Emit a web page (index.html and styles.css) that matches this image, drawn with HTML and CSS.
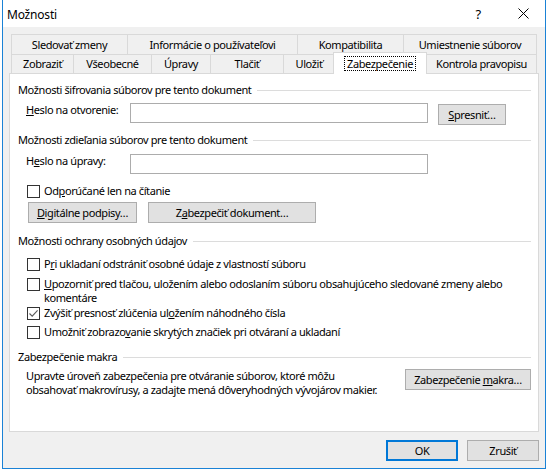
FILE: index.html
```html
<!DOCTYPE html>
<html lang="sk">
<head>
<meta charset="utf-8">
<title>Možnosti</title>
<link rel="stylesheet" href="styles.css">
</head>
<body>
<div class="dialog">
  <div class="titlebar">
    <span class="title">Možnosti</span>
    <span class="help">?</span>
    <span class="close"><svg width="11" height="11" viewBox="0 0 11 11"><path d="M0.5 0.5 L10.5 10.5 M10.5 0.5 L0.5 10.5" stroke="#000" stroke-width="1" fill="none"/></svg></span>
  </div>
  <div class="body">
    <div class="tabs">
      <div class="tabrow row1">
        <div class="tab">Sledovať zmeny</div>
        <div class="tab">Informácie o používateľovi</div>
        <div class="tab">Kompatibilita</div>
        <div class="tab last">Umiestnenie súborov</div>
      </div>
      <div class="tabrow row2">
        <div class="tab">Zobraziť</div>
        <div class="tab">Všeobecné</div>
        <div class="tab">Úpravy</div>
        <div class="tab">Tlačiť</div>
        <div class="tab">Uložiť</div>
        <div class="tab selected"><span class="focus">Zabezpečenie</span></div>
        <div class="tab last">Kontrola pravopisu</div>
      </div>
    </div>
    <div class="panel">
      <div class="heading h1">Možnosti šifrovania súborov pre tento dokument</div>
      <div class="field-row r1">
        <span class="label"><u>H</u>eslo na otvorenie:</span>
        <span class="input"></span>
        <span class="btn spresnit"><span><u>S</u>presniť…</span></span>
      </div>
      <div class="heading h2">Možnosti zdieľania súborov pre tento dokument</div>
      <div class="field-row r2">
        <span class="label">H<u>e</u>slo na úpravy:</span>
        <span class="input"></span>
      </div>
      <div class="check-row c0">
        <span class="box"></span>
        <span class="text">Od<u>p</u>orúčané len na čítanie</span>
      </div>
      <div class="btn-row">
        <span class="btn digi"><span><u>D</u>igitálne podpisy…</span></span>
        <span class="btn zabez"><span>Z<u>a</u>bezpečiť dokument…</span></span>
      </div>
      <div class="heading h3">Možnosti ochrany osobných údajov</div>
      <div class="check-row c1">
        <span class="box"></span>
        <span class="text">P<u>r</u>i ukladaní odstrániť osobné údaje z vlastností súboru</span>
      </div>
      <div class="check-row c2">
        <span class="box"></span>
        <span class="text"><u>U</u>pozorniť pred tlačou, uložením alebo odoslaním súboru obsahujúceho sledované zmeny alebo<br>komentáre</span>
      </div>
      <div class="check-row c3">
        <span class="box checked"><svg width="11" height="11" viewBox="0 0 11 11"><path d="M1.5 5.5 L4.2 8.2 L9.6 2.4" stroke="#5a5a5a" stroke-width="1.1" fill="none"/></svg></span>
        <span class="text">Zvýšiť presnosť zlúčenia ul<u>o</u>žením náhodného čísla</span>
      </div>
      <div class="check-row c4">
        <span class="box"></span>
        <span class="text">Umožniť zobrazo<u>v</u>anie skrytých značiek pri otváraní a ukladaní</span>
      </div>
      <div class="heading h4">Zabezpečenie makra</div>
      <div class="macro-row">
        <p class="macro-text">Upravte úroveň zabezpečenia pre otváranie súborov, ktoré môžu<br>obsahovať makrovírusy, a zadajte mená dôveryhodných vývojárov makier.</p>
        <span class="btn macro"><span>Zabezpečenie <u>m</u>akra…</span></span>
      </div>
    </div>
    <div class="footer">
      <span class="btn ok"><span>OK</span></span>
      <span class="btn cancel"><span>Zrušiť</span></span>
    </div>
  </div>
</div>
</body>
</html>
```

FILE: styles.css
```css
* { box-sizing: border-box; }

html, body {
  margin: 0;
  background: #ffffff;
}

body {
  font-family: "Noto Sans", "Open Sans", sans-serif;
  font-size: 11px;
  letter-spacing: -0.4px;
  color: #000;
}

u { text-decoration: underline; text-underline-offset: 1px; }

.dialog {
  margin-left: 2px;
  width: 544px;
  height: 469px;
  border: 1px solid #1a82d6;
  border-top: none;
  background: #f0f0f0;
  display: flex;
  flex-direction: column;
}

.titlebar {
  height: 27px;
  background: #ffffff;
  display: flex;
  align-items: center;
  flex: none;
}

.title {
  flex: 1;
  padding-left: 4px;
  font-size: 12px;
  letter-spacing: -0.2px;
  padding-top: 1px;
}

.help {
  width: 46px;
  text-align: center;
  font-size: 13px;
}

.close {
  width: 44px;
  display: flex;
  justify-content: center;
  align-items: center;
}

.close svg { display: block; }

.body {
  flex: 1;
  display: flex;
  flex-direction: column;
  padding-top: 7px;
}

.tabs {
  margin-left: 8px;
  width: 526px;
}

.tabrow {
  display: grid;
}

.row1 {
  grid-template-columns: 116px 170px 106px 134px;
  height: 20px;
}

.row2 {
  grid-template-columns: 62px 78px 59px 73px 51px 92px 111px;
  height: 19px;
}

.tab {
  border-top: 1px solid #d9d9d9;
  border-left: 1px solid #d9d9d9;
  display: flex;
  align-items: center;
  justify-content: center;
  white-space: nowrap;
  line-height: 16px;
}

.tab.last { border-right: 1px solid #d9d9d9; }

.tab.selected {
  position: relative;
  z-index: 2;
  background: #ffffff;
  border: 1px solid #d9d9d9;
  border-bottom: none;
  margin: -2px -1px -1px -1px;
}

.focus {
  outline: 1px dotted #000;
  padding: 0 2px;
  line-height: 13px;
}

.panel {
  margin-left: 6px;
  width: 530px;
  height: 359px;
  background: #ffffff;
  border: 1px solid #d9d9d9;
  padding: 0 7px 0 8px;
  flex: none;
}

.heading {
  display: flex;
  align-items: center;
  gap: 6px;
  line-height: 16px;
  white-space: nowrap;
}

.heading::after {
  content: "";
  flex: 1;
  height: 1px;
  background: #dcdcdc;
}

.h1 { margin-top: 8px; }
.h2 { margin-top: 7px; }
.h3 { margin-top: 10px; }
.h4 { margin-top: 10px; }

.field-row {
  display: flex;
  align-items: flex-start;
  padding-left: 8px;
}

.r1 { margin-top: 5px; height: 22px; }
.r2 { margin-top: 6px; height: 20px; }

.label {
  width: 104px;
  line-height: 16px;
  margin-top: -1px;
  white-space: nowrap;
}

.input {
  width: 298px;
  height: 20px;
  border: 1px solid #acacac;
  background: #fff;
}

.btn {
  display: flex;
  align-items: center;
  justify-content: center;
  height: 21px;
  background: #e1e1e1;
  border: 1px solid #adadad;
  white-space: nowrap;
}

.spresnit {
  width: 68px;
  margin-left: 10px;
  margin-top: 1px;
}

.check-row {
  display: flex;
  align-items: flex-start;
  padding-left: 9px;
  line-height: 14px;
  white-space: nowrap;
}

.box {
  flex: none;
  width: 13px;
  height: 13px;
  border: 1px solid #333333;
  background: #fff;
  margin-top: 1px;
  margin-right: 4px;
  display: flex;
  align-items: center;
  justify-content: center;
}

.box svg { display: block; }

.c0 { margin-top: 10px; }
.c1 { margin-top: 8px; }
.c2 { margin-top: 6px; }
.c3 { margin-top: 1px; }
.c4 { margin-top: 5px; }

.btn-row {
  display: flex;
  gap: 11px;
  margin-top: 4px;
  padding-left: 10px;
}

.digi { width: 109px; }
.zabez { width: 168px; }

.macro-row {
  display: flex;
  justify-content: space-between;
  align-items: flex-start;
  margin-top: 4px;
  padding-left: 8px;
}

.macro-text {
  margin: 0;
  line-height: 14px;
  white-space: nowrap;
}

.macro {
  width: 126px;
  margin-top: 0;
}

.footer {
  display: flex;
  justify-content: flex-end;
  gap: 9px;
  padding-top: 8px;
  padding-right: 6px;
}

.ok {
  width: 72px;
  border: 2px solid #0078d7;
}

.cancel { width: 72px; }
```
